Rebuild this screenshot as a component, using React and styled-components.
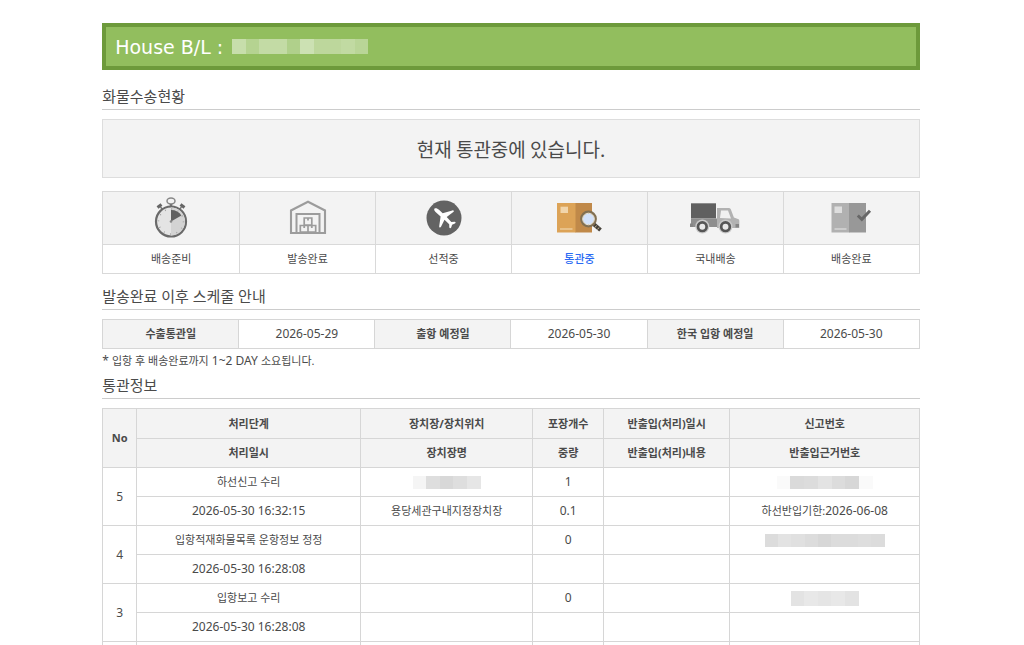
import React from "react";
import styled, { createGlobalStyle } from "styled-components";

const GlobalStyle = createGlobalStyle`
  * {
    box-sizing: border-box;
  }

  body {
    margin: 0 2px 0 0;
    background: #fff;
    color: #4a4a4a;
    font-family: "Noto Sans", "Noto Sans CJK KR", sans-serif;
    font-size: 11px;
  }
`;

const Page = styled.main`
  width: 80%;
  margin: 0 auto;
  padding: 23px 0 40px;
`;

const TitleBar = styled.h1`
  display: flex;
  align-items: center;
  gap: 9px;
  height: 47px;
  margin: 0 0 14px;
  padding: 0 9px;
  border: 4px solid #6d9a3b;
  background: #92be5e;
  color: #fff;
  font-family: "DejaVu Sans", sans-serif;
  font-size: 19px;
  font-weight: normal;
`;

const SectionTitle = styled.h2`
  margin: 0 0 9px;
  border-bottom: 1px solid #ccc;
  font-size: 15px;
  font-weight: normal;
  line-height: 25px;
`;

const StatusBox = styled.p`
  margin: 0 0 13px;
  border: 1px solid #ddd;
  background: #f3f3f3;
  font-family: "Noto Sans CJK KR", sans-serif;
  font-size: 19px;
  line-height: 57px;
  text-align: center;
`;

// Delivery steps
const Steps = styled.ol`
  display: grid;
  grid-template-columns: repeat(6, 1fr);
  margin: 0 0 10px;
  padding: 0;
  border: 1px solid #d9d9d9;
  list-style: none;
`;

const Step = styled.li`
  color: ${(props) => (props.$active ? "#2b6bf3" : "#4a4a4a")};
  font-weight: ${(props) => (props.$active ? 500 : 400)};
  text-align: center;

  & + & {
    border-left: 1px solid #d9d9d9;
  }
`;

const StepIcon = styled.div`
  display: flex;
  align-items: center;
  justify-content: center;
  height: 53px;
  border-bottom: 1px solid #d9d9d9;
  background: #f3f3f3;
`;

const StepLabel = styled.div`
  line-height: 28px;
`;

// Tables
const Table = styled.table`
  width: 100%;
  table-layout: fixed;
  border-collapse: collapse;
`;

const Row = styled.tr`
  height: ${(props) => (props.$head ? 30 : 29)}px;
`;

const HeadCell = styled.th`
  padding: 0;
  border: 1px solid #d6d6d6;
  background: #f3f3f3;
  font-weight: bold;
  line-height: 16px;
`;

const Cell = styled.td`
  padding: 0;
  border: 1px solid #d6d6d6;
  line-height: 16px;
  text-align: center;
`;

const Digits = styled.span`
  font-size: 12px;
`;

const Note = styled.p`
  margin: 0;
  line-height: 24px;
`;

// Masked numbers
const MaskBox = styled.span`
  display: flex;
  width: ${(props) => props.$width}px;
  height: ${(props) => props.$height || 13}px;
  margin: ${(props) => (props.$inline ? "0" : "0 auto")};
`;

const MaskTile = styled.span`
  flex: 1;
  background: ${(props) => props.$color};
`;

const Mask = ({ tiles, width, height, inline }) => (
  <MaskBox $width={width} $height={height} $inline={inline} aria-hidden="true">
    {tiles.map((color, i) => (
      <MaskTile key={i} $color={color} />
    ))}
  </MaskBox>
);

const Icon = ({ children }) => (
  <svg width="50" height="46" viewBox="0 0 50 46" aria-hidden="true">
    {children}
  </svg>
);

const StopwatchIcon = () => (
  <Icon>
    <ellipse cx="25" cy="6" rx="4" ry="3" fill="#f3f3f3" stroke="#888" strokeWidth="1.5" />
    <path d="M25 9v3" stroke="#777" strokeWidth="2.5" />
    <path d="M11.5 12.5l4-3M38.5 12.5l-4-3" stroke="#666" strokeWidth="3" />
    <path d="M14.5 12l2.5 3M35.5 12l-2.5 3" stroke="#777" strokeWidth="1.5" />
    <circle cx="25" cy="26.5" r="15" fill="#e4e4e4" stroke="#6a6a6a" strokeWidth="2.2" />
    <path d="M25 12.5a14 14 0 0 1 0 28z" fill="#d3d3d3" />
    <path d="M25 26.5V15a12 12 0 0 1 10.4 5.5z" fill="#606060" />
    <circle cx="25" cy="26.5" r="12.5" fill="none" stroke="#999" strokeWidth="1.5" strokeDasharray="0.8 5.745" />
    <circle cx="25" cy="26.5" r="1.3" fill="#888" />
  </Icon>
);

const WarehouseIcon = () => (
  <Icon>
    <g fill="none" stroke="#9c9c9c">
      <path d="M8 38V15.5L25 6.8l17 8.7V38z" strokeWidth="2.1" />
      <path d="M13.5 38V19h23v19" strokeWidth="2" />
      <path d="M21.2 23h7.6v7h-7.6zM17.3 30.5H25V37h-7.7zM25 30.5h7.7V37H25z" strokeWidth="1.7" />
      <path d="M25 23v2.5M21.2 30.5V33M28.8 30.5V33" strokeWidth="1.8" />
    </g>
  </Icon>
);

const PlaneIcon = () => (
  <Icon>
    <circle cx="25" cy="23" r="17.5" fill="#636363" />
    <path
      d="M15.5 13.5c1.200-.9 3.200 0 4.500 1.200l3.700 3.600 9.600-2.900c1.500-.4 2.200.9 1 1.700l-6.600 5 4.600 4.900 3.300-.2c1.300.1 1.300 1.300.3 1.800l-2.800 1.100-.9 2.900c-.6 1-1.800.9-1.900-.3l-.1-3-4.700-4.600-3.500 7.100c-.7 1.300-2 .8-1.800-.6l1.400-9.600-4.500-4.100c-1.400-1.200-2.500-2.900-1.600-4z"
      fill="#fff"
    />
  </Icon>
);

const CustomsIcon = () => (
  <Icon>
    <path d="M3 8h19v29.500H3z" fill="#dca357" />
    <path d="M21.5 8H38v29.500H21.5z" fill="#c08949" />
    <path d="M6.5 11.700H14V18H6.500z" fill="#f1d5ab" />
    <path d="M6 34h12.500" stroke="#f1d5ab" strokeWidth="1.2" />
    <path d="M39.500 29l7 6" stroke="#45413a" strokeWidth="4" />
    <path d="M42.500 30.500l-1.500 2M45 32.500l-1.500 2" stroke="#c9b998" strokeWidth="1" />
    <circle cx="34.5" cy="24" r="7" fill="#d3e2fa" stroke="#827052" strokeWidth="2.800" />
    <circle cx="34.5" cy="24" r="5.800" fill="none" stroke="#eee9dc" strokeWidth="1" />
  </Icon>
);

const TruckIcon = () => (
  <Icon>
    <path d="M1 8.300h25v15.200H1z" fill="#606060" />
    <path d="M1 23.500h27V32H1z" fill="#8e8e8e" />
    <path d="M27 13h11.500c1.200 0 2 .5 2.400 1.500l3 8 4.100 1.500c1 .4 1.300 1 1.300 2V33H27z" fill="#b2b2b2" />
    <path d="M31 15.500h7l3 8-11-.5z" fill="#f0f0f0" />
    <path d="M0 28.500h3V32H0zM45.500 29H49v3.500h-3.500z" fill="#858585" />
    <circle cx="12.3" cy="31.5" r="7" fill="#c9c9c9" />
    <circle cx="35.5" cy="31.5" r="7" fill="#c9c9c9" />
    <circle cx="12.3" cy="31.7" r="4.3" fill="#e8e8e8" stroke="#555" strokeWidth="2.7" />
    <circle cx="35.5" cy="31.7" r="4.3" fill="#e8e8e8" stroke="#555" strokeWidth="2.7" />
  </Icon>
);

const DeliveredIcon = () => (
  <Icon>
    <path d="M5.500 8h18v29.500h-18z" fill="#b1b1b1" />
    <path d="M23 8h17v29.500H23z" fill="#989898" />
    <path d="M8.500 11.500H16V18H8.500z" fill="#dedede" />
    <path d="M8.500 34h12" stroke="#dedede" strokeWidth="1.2" />
    <path d="M31.800 20.500l4 3.800L44 15.800" fill="none" stroke="#686868" strokeWidth="3" />
  </Icon>
);

const steps = [
  { label: "배송준비", icon: StopwatchIcon },
  { label: "발송완료", icon: WarehouseIcon },
  { label: "선적중", icon: PlaneIcon },
  { label: "통관중", icon: CustomsIcon, active: true },
  { label: "국내배송", icon: TruckIcon },
  { label: "배송완료", icon: DeliveredIcon },
];

const schedule = [
  ["수출통관일", "2026-05-29"],
  ["출항 예정일", "2026-05-30"],
  ["한국 입항 예정일", "2026-05-30"],
];

const columns = [34, 224, 172, 71, 126, 190];

const records = [
  {
    no: 5,
    stage: "하선신고 수리",
    time: "2026-05-30 16:32:15",
    place: <Mask width={68} tiles={["#f5f5f5", "#dedede", "#d8d8d8", "#dedede", "#e6e6e6"]} />,
    placeName: "용당세관구내지정장치장",
    count: "1",
    weight: "0.1",
    reportNo: (
      <Mask
        width={96}
        tiles={["#fafafa", "#dadada", "#dcdcdc", "#e3e3e3", "#dcdcdc", "#d7d7d7", "#fafafa"]}
      />
    ),
    basis: (
      <>
        하선반입기한:<Digits>2026-06-08</Digits>
      </>
    ),
  },
  {
    no: 4,
    stage: "입항적재화물목록 운항정보 정정",
    time: "2026-05-30 16:28:08",
    count: "0",
    reportNo: (
      <Mask
        width={120}
        tiles={["#dcdcdc", "#e3e3e3", "#e0e0e0", "#dcdcdc", "#d7d7d7", "#dcdcdc", "#dcdcdc", "#dedede", "#dcdcdc"]}
      />
    ),
  },
  {
    no: 3,
    stage: "입항보고 수리",
    time: "2026-05-30 16:28:08",
    count: "0",
    reportNo: (
      <Mask width={68} height={15} tiles={["#e3e3e3", "#e8e8e8", "#e5e5e5", "#e8e8e8", "#e3e3e3"]} />
    ),
  },
  {},
];

const App = () => {
  return (
    <>
      <GlobalStyle />
      <Page>
        <TitleBar>
          House B/L :
          <Mask
            inline
            width={136}
            height={15}
            tiles={[
              "#c7deab", "#b5d391", "#c3dba5", "#c3dba5", "#b0d08b",
              "#cce1b3", "#bdd79c", "#bdd79c", "#c1daa2", "#b9d597",
            ]}
          />
        </TitleBar>

        <SectionTitle>화물수송현황</SectionTitle>
        <StatusBox>현재 통관중에 있습니다.</StatusBox>
        <Steps>
          {steps.map(({ label, icon: StepDrawing, active }) => (
            <Step key={label} $active={active}>
              <StepIcon>
                <StepDrawing />
              </StepIcon>
              <StepLabel>{label}</StepLabel>
            </Step>
          ))}
        </Steps>

        <SectionTitle>발송완료 이후 스케줄 안내</SectionTitle>
        <Table>
          <tbody>
            <Row>
              {schedule.map(([label, date]) => (
                <React.Fragment key={label}>
                  <HeadCell scope="row">{label}</HeadCell>
                  <Cell>
                    <Digits>{date}</Digits>
                  </Cell>
                </React.Fragment>
              ))}
            </Row>
          </tbody>
        </Table>
        <Note>
          <Digits>* </Digits>입항 후 배송완료까지<Digits> 1~2 DAY </Digits>소요됩니다.
        </Note>

        <SectionTitle>통관정보</SectionTitle>
        <Table>
          <colgroup>
            {columns.map((width, i) => (
              <col key={i} width={width} />
            ))}
          </colgroup>
          <thead>
            <Row $head>
              <HeadCell rowSpan={2}>No</HeadCell>
              <HeadCell>처리단계</HeadCell>
              <HeadCell>장치장/장치위치</HeadCell>
              <HeadCell>포장개수</HeadCell>
              <HeadCell>반출입(처리)일시</HeadCell>
              <HeadCell>신고번호</HeadCell>
            </Row>
            <Row>
              <HeadCell>처리일시</HeadCell>
              <HeadCell>장치장명</HeadCell>
              <HeadCell>중량</HeadCell>
              <HeadCell>반출입(처리)내용</HeadCell>
              <HeadCell>반출입근거번호</HeadCell>
            </Row>
          </thead>
          <tbody>
            {records.map((item, i) => (
              <React.Fragment key={i}>
                <Row>
                  <Cell rowSpan={2}>
                    <Digits>{item.no}</Digits>
                  </Cell>
                  <Cell>{item.stage}</Cell>
                  <Cell>{item.place}</Cell>
                  <Cell>
                    <Digits>{item.count}</Digits>
                  </Cell>
                  <Cell />
                  <Cell>{item.reportNo}</Cell>
                </Row>
                <Row>
                  <Cell>
                    <Digits>{item.time}</Digits>
                  </Cell>
                  <Cell>{item.placeName}</Cell>
                  <Cell>
                    <Digits>{item.weight}</Digits>
                  </Cell>
                  <Cell />
                  <Cell>{item.basis}</Cell>
                </Row>
              </React.Fragment>
            ))}
          </tbody>
        </Table>
      </Page>
    </>
  );
};

export default App;
